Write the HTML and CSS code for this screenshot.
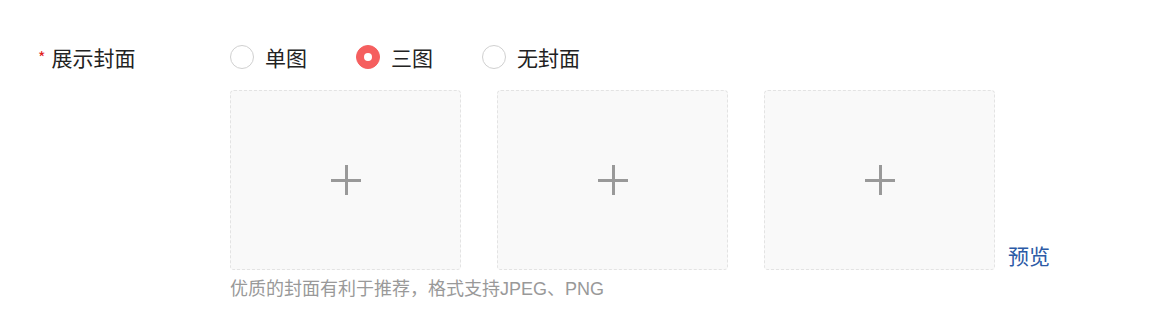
FILE: index.html
```html
<!DOCTYPE html>
<html lang="zh-CN">
<head>
    <meta charset="UTF-8">
    <title>展示封面</title>
    <link rel="stylesheet" href="styles.css">
</head>
<body>
    <div class="form-row">
        <div class="form-label"><span class="required">*</span>展示封面</div>
        <div class="form-body">
            <div class="radio-group">
                <label class="radio"><span class="radio-dot"></span>单图</label>
                <label class="radio checked"><span class="radio-dot"></span>三图</label>
                <label class="radio"><span class="radio-dot"></span>无封面</label>
            </div>
            <div class="cover-list">
                <div class="cover-box"><span class="plus"></span></div>
                <div class="cover-box"><span class="plus"></span></div>
                <div class="cover-box"><span class="plus"></span></div>
                <a class="preview" href="#">预览</a>
            </div>
            <p class="hint">优质的封面有利于推荐，格式支持JPEG、PNG</p>
        </div>
    </div>
</body>
</html>
```

FILE: styles.css
```css
body {
    margin: 0;
    padding: 0;
    background: #fff;
    font-family: "Noto Sans CJK SC", "Liberation Sans", sans-serif;
    color: #222;
}
.form-row {
    display: flex;
    padding: 37px 0 0 38px;
}
.form-label {
    width: 192px;
    font-size: 21px;
    line-height: 40px;
    color: #222;
}
.required {
    color: #e02020;
    font-size: 16px;
    margin-right: 6px;
    vertical-align: 2px;
}
.radio-group {
    display: flex;
    height: 40px;
    align-items: center;
    gap: 49px;
}
.radio {
    display: flex;
    align-items: center;
    gap: 11px;
    font-size: 21px;
    color: #222;
}
.radio-dot {
    width: 22px;
    height: 22px;
    border: 1px solid #d0d0d0;
    border-radius: 50%;
    box-sizing: content-box;
    background: #fff;
    position: relative;
}
.radio.checked .radio-dot {
    background: #f55f5f;
    border-color: #f55f5f;
}
.radio.checked .radio-dot::after {
    content: "";
    position: absolute;
    left: 7px;
    top: 7px;
    width: 8px;
    height: 8px;
    border-radius: 50%;
    background: #fff;
}
.cover-list {
    display: flex;
    align-items: flex-end;
    gap: 36px;
    margin-top: 13px;
}
.cover-box {
    width: 231px;
    height: 180px;
    box-sizing: border-box;
    border: 1px dashed #e3e3e3;
    border-radius: 4px;
    background: #f9f9f9;
    display: flex;
    align-items: center;
    justify-content: center;
}
.plus {
    width: 30px;
    height: 30px;
    position: relative;
}
.plus::before,
.plus::after {
    content: "";
    position: absolute;
    background: #999;
}
.plus::before {
    left: 0;
    top: 14px;
    width: 30px;
    height: 3px;
}
.plus::after {
    left: 14px;
    top: 0;
    width: 3px;
    height: 30px;
}
.preview {
    margin-left: -23px;
    font-size: 21px;
    line-height: 26px;
    padding-bottom: 2px;
    color: #2b5aa6;
    text-decoration: none;
}
.hint {
    margin: 7px 0 0;
    font-family: "Liberation Sans", "Noto Sans CJK SC", sans-serif;
    font-size: 18px;
    line-height: 24px;
    color: #999;
}
```
